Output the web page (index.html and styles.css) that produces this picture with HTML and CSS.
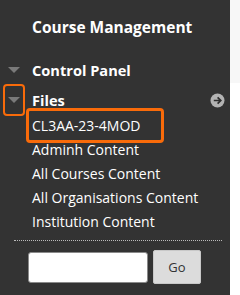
FILE: index.html
```html
<!DOCTYPE html>
<html lang="en">
<head>
  <meta charset="utf-8">
  <title>Course Management</title>
  <link rel="stylesheet" href="styles.css">
</head>
<body>
  <div class="page">
    <nav class="sidebar">
      <h2 class="title">Course Management</h2>
      <ul class="menu">
        <li class="menu-item"><span class="twisty-wrap"><span class="twisty"></span></span>Control Panel</li>
        <li class="menu-item">
          <span class="twisty-wrap twisty-wrap--marked"><span class="twisty"></span></span>Files
          <svg class="go-arrow" width="15" height="15" viewBox="0 0 15 15">
            <circle cx="7.5" cy="7.5" r="7" fill="#b3b3b3"/>
            <path d="M3.8 7.5h6.8M7.6 4.3l3.2 3.2-3.2 3.2" fill="none" stroke="#2e2e2e" stroke-width="1.7"/>
          </svg>
        </li>
      </ul>
      <ul class="files">
        <li><span class="marked">CL3AA-23-4MOD</span></li>
        <li>Adminh Content</li>
        <li>All Courses Content</li>
        <li>All Organisations Content</li>
        <li>Institution Content</li>
      </ul>
      <hr class="divider">
      <form class="search">
        <input type="text" class="search-input">
        <button type="button" class="search-go">Go</button>
      </form>
    </nav>
    <div class="gutter"><div class="gutter-top"></div></div>
  </div>
</body>
</html>
```

FILE: styles.css
```css
*, *::before, *::after {
  box-sizing: border-box;
}
body {
  margin: 0;
  background: #fff;
  font-family: "Open Sans", "Liberation Sans", sans-serif;
}
.page {
  display: flex;
  height: 295px;
}

/* Sidebar */
.sidebar {
  width: 230px;
  background: #333;
  color: #fff;
}
.title {
  margin: 17px 0 0 32px;
  font-size: 15.5px;
  line-height: 20px;
  font-weight: 700;
}
ul {
  list-style: none;
  margin: 0;
  padding: 0;
}
.menu {
  margin-top: 18px;
}
.menu-item {
  display: flex;
  align-items: center;
  height: 30px;
  padding-left: 3px;
  font-size: 14.6px;
  font-weight: 700;
}
.twisty-wrap {
  display: flex;
  justify-content: center;
  align-items: center;
  flex: none;
  width: 22px;
  height: 32px;
  margin-right: 7px;
}
.twisty-wrap--marked {
  border: 2.5px solid #f96b0a;
  border-radius: 4px;
}
.twisty {
  width: 0;
  height: 0;
  border-left: 6px solid transparent;
  border-right: 6px solid transparent;
  border-top: 6px solid #7a7a7a;
}
.go-arrow {
  margin-left: auto;
  margin-right: 5px;
}

.files {
  margin-top: -1px;
  padding-left: 32px;
  font-size: 14px;
  line-height: 24px;
}
.marked {
  display: inline-block;
  margin: -6px 0 -5px -6px;
  padding: 3px 20px 2px 3px;
  border: 3px solid #f96b0a;
  border-radius: 4px;
}

.divider {
  margin: 6px 8px 0 14px;
  border: 0;
  border-top: 1px dotted #bbb;
}

/* Search */
.search {
  display: flex;
  align-items: center;
  gap: 5px;
  margin: 9px 0 0 28px;
}
.search-input {
  width: 120px;
  height: 31px;
  border: 1px solid #8a8a8a;
  border-radius: 3px;
  background: #fff;
}
.search-go {
  width: 48px;
  height: 34px;
  border: 1px solid #c8c8c8;
  border-radius: 2px;
  background: #dcdcdc;
  color: #333;
  font-family: "Open Sans", "Liberation Sans", sans-serif;
  font-size: 13px;
}

/* Right edge */
.gutter {
  flex: 1;
}
.gutter-top {
  height: 83px;
  background: #f7f7f7;
}
```
